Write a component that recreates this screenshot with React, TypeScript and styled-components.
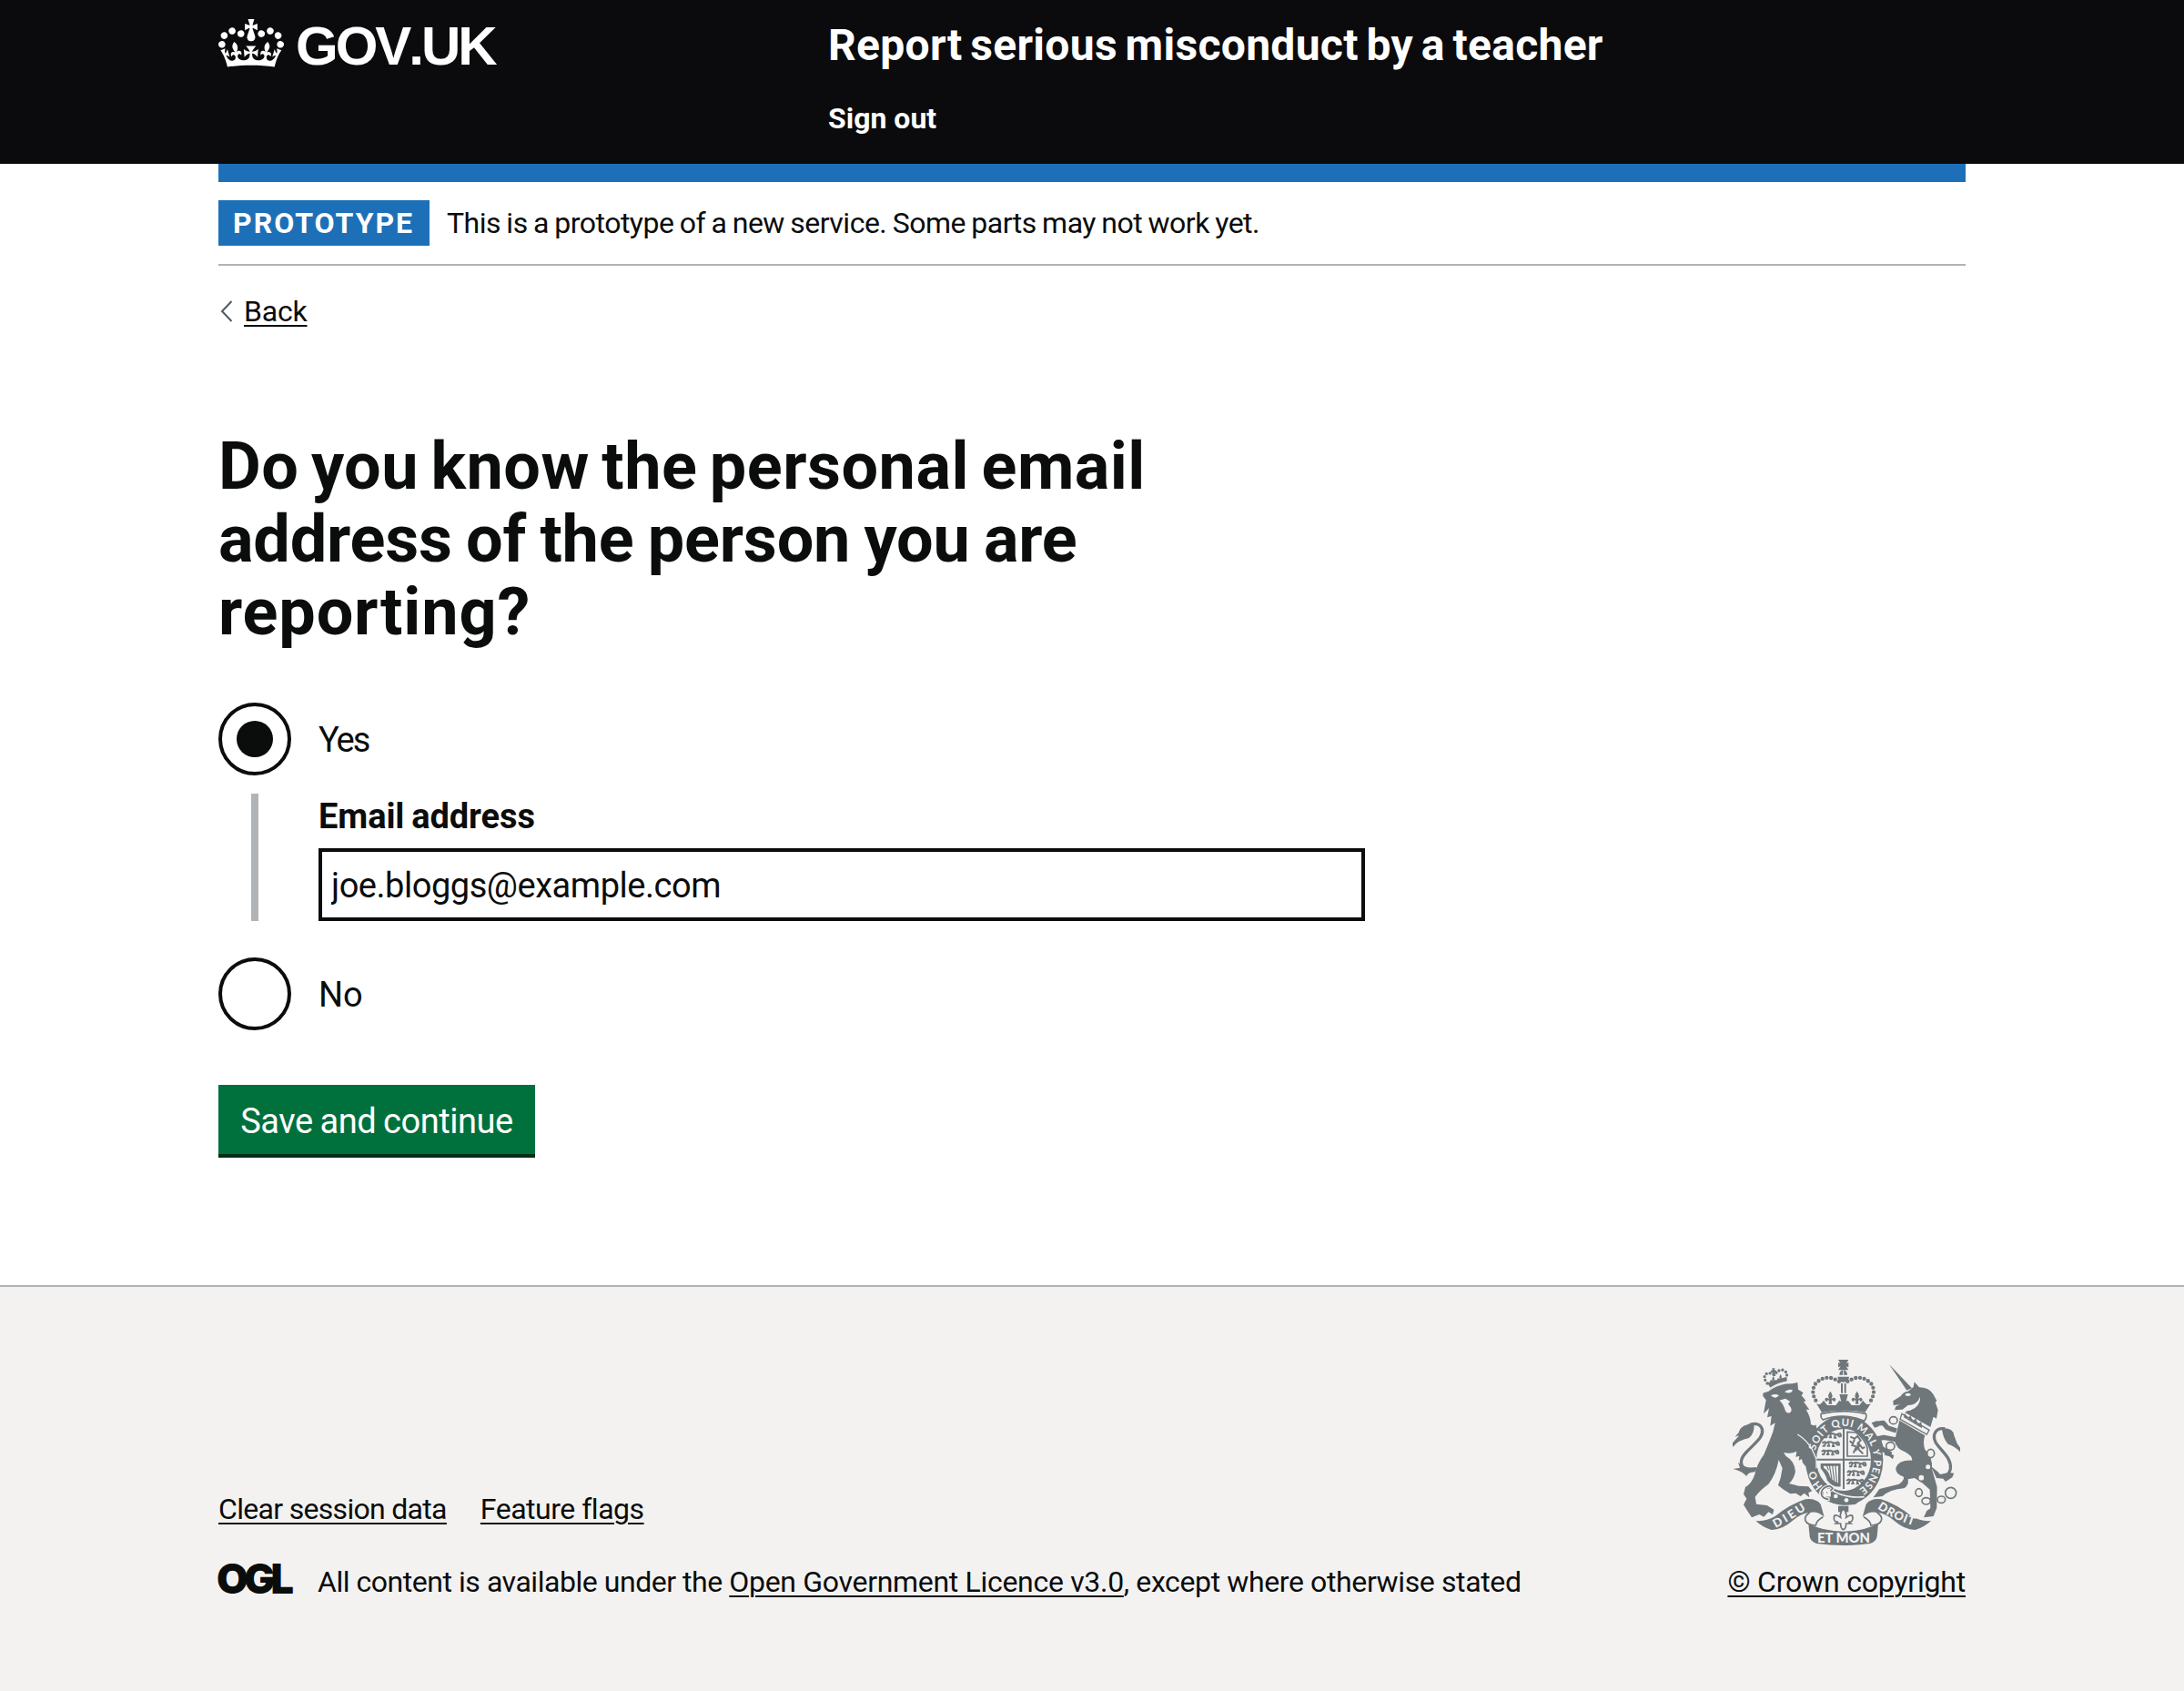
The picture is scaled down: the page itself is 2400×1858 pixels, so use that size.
import React from "react";
import styled, { createGlobalStyle, css } from "styled-components";

const ink = "#0b0c0c";
const blue = "#1d70b8";
const rule = "#b1b4b6";
const paper = "#f3f2f1";
const crest = "#6f777b";

const GlobalStyle = createGlobalStyle`
  *, *::before, *::after { box-sizing: border-box; }
  body {
    margin: 0;
    background: #fff;
    color: ${ink};
    font-family: Roboto, "Noto Sans", sans-serif;
  }
`;

type Track = { $ls?: number; $ws?: number };
const tracking = css<Track>`
  letter-spacing: ${(p) => p.$ls ?? 0}px;
  word-spacing: ${(p) => p.$ws ?? 0}px;
`;

const Page = styled.div`
  display: flex;
  flex-direction: column;
  min-height: 1858px;
`;
const Container = styled.div`
  width: 1920px;
  margin: 0 auto;
`;

const Header = styled.header`
  height: 180px;
  background: #0b0b0d;
  color: #fff;
`;
const HeaderRow = styled(Container)`
  display: grid;
  grid-template-columns: 670px 1fr;
`;
const Brand = styled.a`
  display: flex;
  gap: 13px;
  padding-top: 21px;
`;
const CrownIcon = styled.svg`
  width: 72px;
  height: 53px;
`;
const Wordmark = styled.span<Track>`
  font: bold 60px/60px "Liberation Sans", Arial, sans-serif;
  font-kerning: none;
  ${tracking}
`;
const HeaderContent = styled.div`
  display: flex;
  flex-direction: column;
  gap: 30px;
  padding-top: 20px;
`;
const ServiceName = styled.a<Track>`
  font-size: 48px;
  line-height: 60px;
  font-weight: 700;
  ${tracking}
`;
const HeaderLink = styled.a<Track>`
  font-size: 32px;
  line-height: 40px;
  font-weight: 700;
  ${tracking}
`;

const BlueBar = styled(Container)`
  height: 20px;
  background: ${blue};
`;
const PhaseBanner = styled(Container)`
  display: flex;
  align-items: flex-start;
  gap: 19px;
  padding: 20px 0;
  border-bottom: 2px solid ${rule};
`;
const Tag = styled.strong<Track>`
  width: 232px;
  height: 50px;
  padding-left: 16px;
  background: ${blue};
  color: #fff;
  font-size: 32px;
  line-height: 51px;
  ${tracking}
`;
const PhaseText = styled.span<Track>`
  font-size: 32px;
  line-height: 50px;
  ${tracking}
`;

const BackRow = styled(Container)`
  display: flex;
  align-items: center;
  padding: 30px 0 0 2px;
`;
const Chevron = styled.svg`
  width: 14px;
  height: 24px;
  margin-right: 12px;
`;
const TextLink = styled.a<Track>`
  color: ${ink};
  text-decoration: underline;
  text-decoration-thickness: 2px;
  text-underline-offset: 4px;
  font-size: 32px;
  line-height: 40px;
  ${tracking}
`;

const Main = styled(Container).attrs({ as: "main" })`
  flex: 1;
  padding-top: 111px;
`;
const Heading = styled.h1`
  margin: 0 0 59px;
  font-size: 72px;
  line-height: 80px;
  font-weight: 700;
`;
const HeadingLine = styled.span<Track>`
  display: block;
  ${tracking}
`;

const RadioRow = styled.label`
  display: flex;
  align-items: center;
  gap: 30px;
  height: 80px;
`;
const Radio = styled.span<{ $checked?: boolean }>`
  display: grid;
  place-items: center;
  width: 80px;
  height: 80px;
  border: 4px solid ${ink};
  border-radius: 50%;
  &::after {
    content: "";
    width: 40px;
    height: 40px;
    border-radius: 50%;
    background: ${(p) => (p.$checked ? ink : "transparent")};
  }
`;
const RadioText = styled.span<Track>`
  padding-top: 2px;
  font-size: 38px;
  line-height: 76px;
  ${tracking}
`;
const Conditional = styled.div`
  margin: 20px 0 40px 36px;
  height: 140px;
  width: 1224px;
  padding-left: 66px;
  border-left: 8px solid ${rule};
`;
const FieldLabel = styled.label<Track>`
  display: block;
  margin-bottom: 10px;
  font-size: 38px;
  line-height: 50px;
  font-weight: 700;
  ${tracking}
`;
const Input = styled.input<Track>`
  display: block;
  width: 100%;
  height: 80px;
  padding: 2px 10px 0;
  border: 4px solid ${ink};
  border-radius: 0;
  background: #fff;
  color: ${ink};
  font-family: inherit;
  font-size: 38px;
  ${tracking}
`;
const Button = styled.button<Track>`
  display: block;
  margin-top: 60px;
  width: 348px;
  height: 80px;
  padding: 3px 0 0;
  border: 0;
  border-bottom: 4px solid #002d18;
  background: #00703c;
  color: #fff;
  font-family: inherit;
  font-size: 38px;
  white-space: nowrap;
  ${tracking}
`;

const Footer = styled.footer`
  height: 446px;
  border-top: 2px solid ${rule};
  background: ${paper};
`;
const FooterRow = styled(Container)`
  display: flex;
  justify-content: space-between;
  align-items: flex-end;
  padding-top: 80px;
`;
const FooterMeta = styled.div`
  display: flex;
  flex-direction: column;
  gap: 40px;
`;
const FooterLinks = styled.div`
  display: flex;
  gap: 37px;
`;
const Licence = styled.div`
  display: flex;
  align-items: flex-start;
`;
const OglLogo = styled.svg`
  width: 84px;
  height: 36px;
  margin-right: 25px;
  overflow: visible;
`;
const LicenceText = styled.span<Track>`
  font-size: 32px;
  line-height: 40px;
  white-space: pre;
  ${tracking}
`;
const Copyright = styled.div`
  display: flex;
  flex-direction: column;
  align-items: flex-end;
  gap: 20px;
`;
const Arms = styled.svg`
  width: 250px;
  height: 204px;
  margin-right: 6px;
  overflow: visible;
`;

const Crown = () => (
  <CrownIcon viewBox="0 0 132 97" fill="#fff">
    <path d="M25 30.2c3.5 1.5 7.7-.2 9.1-3.7 1.5-3.6-.2-7.8-3.9-9.2-3.6-1.4-7.6.3-9.1 3.9-1.4 3.5.3 7.5 3.9 9zM9 39.5c3.6 1.5 7.8-.2 9.2-3.7 1.5-3.6-.2-7.8-3.9-9.1-3.6-1.5-7.6.2-9.1 3.8-1.4 3.5.3 7.5 3.8 9zM4.4 57.2c3.5 1.5 7.7-.2 9.1-3.8 1.5-3.6-.2-7.7-3.9-9.1-3.5-1.5-7.6.3-9.1 3.8-1.4 3.5.3 7.6 3.9 9.1zm38.3-21.4c3.5 1.5 7.7-.2 9.1-3.8 1.5-3.6-.2-7.7-3.9-9.1-3.6-1.5-7.6.3-9.1 3.8-1.3 3.6.4 7.7 3.9 9.1zm64.4-5.6c-3.6 1.5-7.8-.2-9.1-3.7-1.5-3.6.2-7.8 3.8-9.2 3.6-1.4 7.7.3 9.2 3.9 1.3 3.5-.4 7.5-3.9 9zm15.9 9.3c-3.6 1.5-7.7-.2-9.1-3.7-1.5-3.6.2-7.8 3.7-9.1 3.6-1.5 7.7.2 9.2 3.8 1.5 3.5-.3 7.5-3.8 9zm4.7 17.7c-3.6 1.5-7.8-.2-9.2-3.8-1.5-3.6.2-7.7 3.9-9.1 3.6-1.5 7.7.3 9.2 3.8 1.3 3.5-.4 7.6-3.9 9.1zM89.3 35.8c-3.6 1.5-7.8-.2-9.2-3.8-1.4-3.6.2-7.7 3.9-9.1 3.6-1.5 7.7.3 9.2 3.8 1.4 3.6-.3 7.7-3.9 9.1zM69.7 17.7l8.9 4.7V9.3l-8.9 2.8c-.2-.3-.5-.6-.9-.9L72.4 0H59.6l3.5 11.2c-.3.3-.6.5-.9.9l-8.8-2.8v13.1l8.8-4.7c.3.3.6.7.9.9l-5 15.4v.1c-.2.8-.4 1.6-.4 2.4 0 4.1 3.1 7.5 7 8.1h.2c.3 0 .7.1 1 .1.4 0 .7 0 1-.1h.2c4-.6 7.1-4.1 7.1-8.1 0-.8-.1-1.7-.4-2.4V34l-5.1-15.4c.4-.2.7-.6 1-.9zM66 92.8c16.9 0 32.8 1.1 47.1 3.2 4-16.9 8.9-26.7 14-33.5l-9.6-3.4c1 4.9 1.1 7.2 0 10.2-1.5-1.4-3-4.3-4.2-8.7L108.6 76c2.8-2 5-3.2 7.5-3.3-4.4 9.4-10 11.9-13.6 11.2-4.3-.8-6.3-4.6-5.6-7.9 1-4.7 5.7-5.9 8-.5 4.3-8.7-3-11.4-7.6-8.8 7.1-7.2 7.9-13.5 2.1-21.1-8 6.1-8.1 12.3-4.5 20.8-4.7-5.4-12.1-2.5-9.5 6.2 3.4-5.2 7.9-2 7.2 3.1-.6 4.3-6.4 7.8-13.5 7.2-10.3-.9-10.9-8-11.2-13.8 2.5-.5 7.1 1.8 11 7.3L80.2 60c-4.1 4.4-8 5.3-12.3 5.4 1.4-4.4 8-11.6 8-11.6H55.5s6.4 7.2 7.9 11.6c-4.2-.1-8-1-12.3-5.4l1.4 16.4c3.9-5.5 8.5-7.7 10.9-7.3-.3 5.8-.9 12.8-11.1 13.8-7.2.6-12.9-2.9-13.5-7.2-.7-5 3.8-8.3 7.1-3.1 2.7-8.7-4.6-11.6-9.4-6.2 3.7-8.5 3.6-14.7-4.6-20.8-5.8 7.6-5 13.9 2.2 21.1-4.7-2.6-11.9.1-7.7 8.8 2.3-5.5 7.1-4.2 8.1.5.7 3.3-1.3 7.1-5.7 7.9-3.5.7-9-1.8-13.5-11.2 2.5.1 4.7 1.3 7.5 3.3l-4.7-15.4c-1.2 4.4-2.7 7.2-4.3 8.7-1.1-3-.9-5.3 0-10.2l-9.5 3.4c5 6.9 9.9 16.7 14 33.5 14.8-2.1 30.8-3.2 47.7-3.2z" />
  </CrownIcon>
);

const Fleur = ({ x, y, s = 1 }: { x: number; y: number; s?: number }) => (
  <path
    transform={`translate(${x} ${y}) scale(${s})`}
    d="M0 -20Q-9 -8 -6 0L-3 6Q-14 -4 -18 6Q-18 14 -10 14Q-8 10 -10 9Q-4 8 -4 14L-6 22H6L4 14Q4 8 10 9Q8 10 10 14Q18 14 18 6Q14 -4 3 6L6 0Q9 -8 0 -20Z"
  />
);

const passant = "M0 6q6 -10 12 -2q10 -6 24 0q10 2 14 -4M10 4l-3 10h-7M20 4l2 10h-7M36 5l-2 10h7M42 4l10 9M50 0q8 6 3 13";
const Lions = ({ x, y }: { x: number; y: number }) => (
  <g transform={`translate(${x} ${y})`} fill="none" stroke={crest} strokeWidth={6}>
    <path d={passant} transform="translate(8 -8)" />
    <path d={passant} transform="translate(2 20)" />
    <path d={passant} transform="translate(0 48)" />
  </g>
);

const RoyalArms = () => (
  <Arms viewBox="72 72 750 612" fill={crest}>
    {/* lion's crown */}
    <path d="M186 148Q215 140 250 128L252 146Q222 150 198 167Z" />
    <path d="M186 150Q172 132 180 120Q194 112 210 122Q222 104 238 106Q254 112 250 132" fill="none" stroke={crest} strokeWidth={10} strokeLinecap="round" strokeDasharray="0 12" />
    <path d="M198 108l6 -2l-2 -6h9l-1 6l6 2v6l-6 0l4 12h-9l0 -11l-7 -1z" />
    <Fleur x={206} y={138} s={0.6} />
    <Fleur x={230} y={132} s={0.6} />
    <path d="M196 166Q222 150 254 144" fill="none" stroke={paper} strokeWidth={4} />
    {/* lion */}
    <path d="M172 182L190 176Q225 150 268 151L286 147L288 170L305 181L299 190L314 208L306 210L325 237L314 236Q330 262 330 286L346 290L333 302L318 330Q334 345 342 372L349 400L347 425L340 420L336 432L326 420L318 428L305 412L312 400L298 400L290 404L292 390L280 392L283 374Q265 384 240 378L248 390Q276 406 279 440Q274 466 258 480L290 488L322 490L334 505L322 510L325 526L308 512L296 522L280 512L262 514L240 500L222 486L230 462L236 430L224 402Q214 452 190 482Q162 502 146 524L150 548L185 552L208 566L204 582L190 574L175 590L160 582L135 592L122 572L108 550L118 530L108 515L114 492Q135 480 145 450Q152 416 175 385Q192 345 205 310L212 280L196 290L200 258L186 262L192 232L174 250L182 205L172 192Z" />
    <path d="M198 190Q212 182 225 190Q212 204 198 190ZM243 178Q258 166 270 172Q264 188 243 178ZM226 206L246 200L262 210Q252 216 258 222Q272 236 262 246Q250 252 245 238Q240 218 226 206Z" fill={paper} />
    <path d="M152 432C100 444 86 410 116 378C150 342 176 326 169 300C162 280 140 280 124 290" fill="none" stroke={crest} strokeWidth={10} />
    <path d="M142 284Q98 284 92 312L80 326L94 322L72 346V360Q92 336 126 330Q146 312 142 284ZM74 432L96 428L90 410Q112 432 150 426L146 442Q120 444 118 456Q104 440 74 432Z" />
    {/* garter */}
    <path d="M346 286Q322 310 312 345L322 352L350 300Z" />
    <ellipse cx="440" cy="403" rx="128" ry="148" />
    <ellipse cx="438" cy="402" rx="90" ry="102" fill={paper} />
    <path id="garterTop" d="M345 372A98 112 0 1 1 496 494" fill="none" />
    {/* lion's foreleg over the garter */}
    <path d="M280 314Q316 336 332 366L346 400L346 428L340 420L336 433L326 420L318 430L303 412Z" />
    <path d="M286 318Q318 338 334 368L348 400L348 430" fill="none" stroke={paper} strokeWidth={4} />
    <g fill={paper} fontFamily="Lato" fontWeight="700" fontSize="34">
      <text>
        <textPath href="#garterTop" textLength="412">SOIT QUI MAL Y PENSE</textPath>
      </text>
      <text transform="translate(369 490) rotate(-128)">H</text>
      <text transform="translate(353 462) rotate(-112)">O</text>
    </g>
    {/* quarters */}
    <path d="M435 300h6v98h86v6h-86v94h-6v-94h-86v-6h86z" />
    <Lions x={366} y={322} />
    <Lions x={448} y={418} />
    <path d="M450 310V390H516V362Q506 330 478 312Z" fill="none" stroke={crest} strokeWidth={5} />
    <path d="M460 326l14 6l10 -8l10 14l-8 8l14 18l8 -4M474 334l-8 20l14 4l-10 22M484 346l4 22l14 14M458 340l8 6M490 356l-14 16" fill="none" stroke={crest} strokeWidth={6} />
    <path d="M362 414H428V490Q402 494 384 470Q380 452 362 430Z" />
    <path d="M372 422H420V478Q400 472 392 456Q390 440 372 428Z" fill={paper} />
    <path d="M382 420l6 16M391 420l8 46M401 420l6 52M411 420l4 56" stroke={crest} strokeWidth={3.5} />
    {/* strap and buckle */}
    <path d="M392 494Q450 536 508 520L478 548Q430 556 380 536Z" />
    <path d="M396 500Q440 530 506 524" fill="none" stroke={paper} strokeWidth={5} />
    <circle cx="412" cy="522" r="7" fill={paper} />
    <circle cx="447" cy="535" r="7" fill={paper} />
    <path d="M392 488Q366 492 362 512Q366 532 392 532M392 488l10 8l-8 8M376 502h14v16h-14z" fill="none" stroke={paper} strokeWidth={11} />
    <path d="M392 488Q366 492 364 512Q366 530 388 532M392 488l10 8l-8 8" fill="none" stroke={crest} strokeWidth={5} />
    {/* crown above the shield */}
    <path d="M420 72h34l-7 12l7 -3v16l-8 -3l8 12h-34l8 -12l-8 3v-16l7 3zM424 122q0 -14 13 -16q13 2 13 16zM418 128h38q0 16 -19 18q-19 -2 -19 -18z" />
    <path d="M437 106v20" stroke={paper} strokeWidth={3} />
    <path d="M432 150v32M443 150v32" stroke={crest} strokeWidth={6} />
    <path d="M346 206Q328 176 346 150Q372 124 404 134L424 144M528 206Q546 176 528 150Q502 124 470 134L450 144" fill="none" stroke={crest} strokeWidth={13} strokeLinecap="round" strokeDasharray="0 14.4" />
    <path d="M348 216Q360 226 372 206L384 222H412L424 206L430 210L424 186H452L446 210L452 206L464 222H490L502 206Q514 226 528 216L508 246Q437 232 366 246Z" />
    <Fleur x={394} y={196} />
    <Fleur x={482} y={196} />
    <path d="M364 250Q437 234 511 250Q516 262 506 274Q437 244 370 270Q360 262 364 250Z" fill={paper} stroke={crest} strokeWidth={5} />
    {/* unicorn */}
    <path d="M588 87L663 166L646 173Z" />
    <path d="M650 176L668 162L671 145L687 163Q720 164 733 185L745 208L740 212L749 238L744 266L734 260L724 294L640 246Q648 240 656 238Q688 226 690 196Q680 222 650 222L632 236L606 238L610 226L624 220L602 222L601 208L626 192Q634 178 650 176Z" />
    <ellipse cx="650" cy="187" rx="9" ry="5" fill={paper} />
    <path d="M690 194Q680 224 650 224L634 238L656 240Q692 226 690 194Z" fill={paper} />
    <path d="M630 250L720 304L712 318L624 268Z" fill={paper} stroke={crest} strokeWidth={4} />
    <path d="M636 262l4 -14l10 18l8 -12l8 22l10 -12l6 22l12 -10l2 22z" />
    <path d="M622 272L706 322Q698 345 706 368Q732 392 729 432L746 492L745 560L734 588L714 590L702 592L712 570L724 562L722 500Q700 478 672 462L650 466Q654 488 636 496Q590 500 566 522L536 526L556 498L620 482Q638 470 636 458Q608 448 610 428Q620 402 664 404Q664 388 640 376Q612 366 606 340Z" />
    <path d="M612 306L582 296L568 280L540 284M614 336L570 328L552 332L562 364L594 384" fill="none" stroke={crest} strokeWidth={16} strokeLinejoin="round" />
    <path d="M548 274l-18 6l10 16l14 -4zM578 372l26 16l-4 12l-12 -10l-16 -4z" />
    <path d="M772 300C742 294 728 320 742 346C764 378 794 396 790 432Q786 450 772 456" fill="none" stroke={crest} strokeWidth={10} />
    <path d="M762 298Q800 296 802 322L812 348L822 362V376Q806 358 782 350Q764 330 762 298ZM726 424Q748 440 756 450L784 444L802 446L796 460L774 474L766 464L744 462Z" />
    <g fill={paper} stroke={crest} strokeWidth={5}>
      <ellipse cx="602" cy="272" rx="13" ry="12" />
      <ellipse cx="592" cy="357" rx="14" ry="13" />
      <ellipse cx="725" cy="381" rx="12" ry="14" />
      <circle cx="716" cy="425" r="10" />
      <circle cx="694" cy="461" r="11" />
      <ellipse cx="686" cy="510" rx="11" ry="13" />
      <ellipse cx="710" cy="538" rx="14" ry="11" />
      <ellipse cx="760" cy="533" rx="13" ry="11" />
      <circle cx="791" cy="511" r="18" />
    </g>
    {/* motto ribbon */}
    <path d="M148 603Q182 606 212 588Q262 548 312 532Q346 528 362 548L374 590Q352 570 326 576Q298 578 270 602Q236 632 200 633Q170 624 148 603ZM726 603Q692 606 662 588Q612 548 562 532Q528 528 512 548L500 590Q522 570 548 576Q576 578 604 602Q638 632 674 633Q704 624 726 603Z" />
    <path d="M326 576Q304 590 314 606Q320 616 346 618Q348 602 370 590M548 576Q570 590 560 606Q554 616 528 618Q526 602 504 590" fill="none" stroke={crest} strokeWidth={5} />
    <path d="M322 612Q372 638 437 638Q502 638 552 612L548 655Q545 672 525 678Q480 684 437 684Q394 684 349 678Q329 672 326 655Z" />
    <path id="dieu" d="M214 627Q262 602 322 560" fill="none" />
    <path id="droit" d="M549 562Q602 600 684 624" fill="none" />
    <g fill={paper} fontFamily="Lato" fontWeight="900">
      <text fontSize="39">
        <textPath href="#dieu" textLength="118">DIEU</textPath>
      </text>
      <text fontSize="39">
        <textPath href="#droit" textLength="132">DROIT</textPath>
      </text>
      <text x="438" y="675" fontSize="46" textAnchor="middle" textLength="174" lengthAdjust="spacingAndGlyphs">ET MON</text>
    </g>
    <path d="M420 554h34v20h-34z" />
    <path d="M437 564Q424 576 428 592Q406 576 406 594Q406 608 420 606L412 612L428 612Q428 630 437 632Q446 630 446 612L462 612L454 606Q468 608 468 594Q468 576 446 592Q450 576 437 564Z" fill={paper} stroke={crest} strokeWidth={5} />
  </Arms>
);

export default function App() {
  return (
    <Page>
      <GlobalStyle />
      <Header>
        <HeaderRow>
          <Brand>
            <Crown />
            <Wordmark $ls={-3}>GOV.UK</Wordmark>
          </Brand>
          <HeaderContent>
            <ServiceName $ls={0.3} $ws={-3.5}>Report serious misconduct by a teacher</ServiceName>
            <HeaderLink>Sign out</HeaderLink>
          </HeaderContent>
        </HeaderRow>
      </Header>
      <BlueBar />
      <PhaseBanner>
        <Tag $ls={2}>PROTOTYPE</Tag>
        <PhaseText $ls={-0.5} $ws={-1.1}>
          This is a prototype of a new service. Some parts may not work yet.
        </PhaseText>
      </PhaseBanner>
      <BackRow>
        <Chevron viewBox="0 0 14 24">
          <path d="M12.5 1L2 12l10.5 11" fill="none" stroke="#505a5f" strokeWidth="2" />
        </Chevron>
        <TextLink $ls={-0.2}>Back</TextLink>
      </BackRow>
      <Main>
        <Heading>
          <HeadingLine $ls={0.48} $ws={-4.86}>Do you know the personal email </HeadingLine>
          <HeadingLine $ls={-0.2} $ws={-2.37}>address of the person you are </HeadingLine>
          <HeadingLine $ls={0.85}>reporting?</HeadingLine>
        </Heading>
        <RadioRow>
          <Radio $checked />
          <RadioText $ls={-2}>Yes</RadioText>
        </RadioRow>
        <Conditional>
          <FieldLabel $ls={-0.08} $ws={-1.5}>Email address</FieldLabel>
          <Input $ls={-0.46} defaultValue="joe.bloggs@example.com" />
        </Conditional>
        <RadioRow>
          <Radio />
          <RadioText>No</RadioText>
        </RadioRow>
        <Button $ls={-0.45} $ws={-1.1}>Save and continue</Button>
      </Main>
      <Footer>
        <FooterRow>
          <FooterMeta>
            <FooterLinks>
              <TextLink $ls={-0.69}>Clear session data</TextLink>
              <TextLink $ls={-0.49}>Feature flags</TextLink>
            </FooterLinks>
            <Licence>
              <OglLogo viewBox="0 0 84 36">
                <text x="-2" y="33" fontFamily="Inter" fontWeight="900" fontSize="45" fill={ink} textLength="85">OGL</text>
              </OglLogo>
              <LicenceText $ls={-0.46}>All content is available under the </LicenceText>
              <TextLink $ls={-0.31}>Open Government Licence v3.0</TextLink>
              <LicenceText $ls={-0.38}>, except where otherwise stated</LicenceText>
            </Licence>
          </FooterMeta>
          <Copyright>
            <RoyalArms />
            <TextLink $ls={-0.2}>© Crown copyright</TextLink>
          </Copyright>
        </FooterRow>
      </Footer>
    </Page>
  );
}
